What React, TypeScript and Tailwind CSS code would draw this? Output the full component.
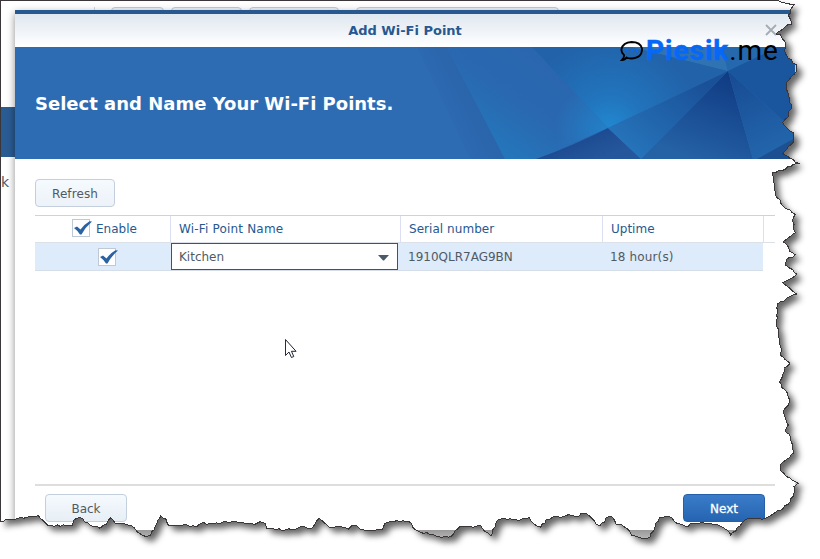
import React from "react";

const EDGE: number[][] = [
  [776, 0.5], [785, 3], [794, 4.7], [790.7, 10], [790.7, 13], [788.3, 15], [790.7, 20], [791.7, 24], [786, 26], [781.7, 30], [776, 34], [780.7, 35], [782, 38.3], [786, 43.3], [784.7, 50], [785.3, 53.3], [788.3, 58.3], [796.7, 65], [796, 71.7], [791.7, 76], [786.7, 82.7], [786, 88.3], [788.3, 93.3], [789.3, 98.3], [791.7, 108.3], [788.3, 113.3], [788.3, 117], [782.7, 122.7], [788.3, 129.3], [794, 133.3], [794, 141.7], [788.3, 146.7], [782.7, 154], [790, 158.3], [798.3, 163.3], [793.3, 164.3], [785, 169.3], [772.7, 172.7], [773.3, 178.3], [774, 183], [775, 195], [780, 200], [782.7, 206], [790, 210], [795.3, 214], [793.3, 218], [793.3, 228], [795.3, 232.7], [790, 236.7], [783.3, 241.7], [788.3, 246.7], [790, 251.7], [795.3, 255], [786.7, 259.3], [785.3, 265], [790, 268.3], [797.3, 274], [790, 279], [782.7, 282.7], [790, 288.3], [796.7, 294], [790, 296.7], [784, 301], [777.3, 304.3], [778, 311.7], [776, 321.7], [778.7, 333.3], [779.3, 343.3], [781.7, 350], [780, 355], [790, 363.3], [784, 368], [782.7, 375], [779.3, 381.7], [781.7, 387.3], [786, 390.7], [790, 400], [788.3, 405], [783.3, 410.7], [785.7, 418.3], [788.3, 425], [785.3, 430], [790.7, 437.3], [792.7, 445], [794, 452.7], [786.7, 459.3], [780, 465], [780.7, 470.7], [786.7, 476.7], [798, 483.3], [794, 486.7], [794, 493.3], [790, 501.7], [783.3, 508.3], [775, 512.7], [770, 516], [762.7, 519.3], [753.3, 518.3], [746, 519.3], [740, 526], [730.7, 535], [726.7, 530], [721.7, 526.7], [713.3, 524.3], [703.3, 522.7], [690, 524], [688.3, 526.7], [676.7, 523.3], [671.7, 517.3], [666, 516], [659.3, 517.3], [655, 526.7], [650, 537.3], [643.3, 538.3], [631.7, 535.7], [629.3, 530.7], [621.7, 525], [616, 524], [611.7, 516.7], [608.3, 516.7], [600, 526], [596, 524], [591.7, 518.3], [586.7, 514], [580.7, 514], [578.3, 516.7], [568.3, 514.7], [563.3, 516.7], [553.3, 516.7], [546, 520], [540.7, 527.3], [533.3, 523.3], [529.3, 517.7], [516.7, 520], [503.3, 518.3], [497.7, 520], [495, 526.7], [491, 535.7], [488.3, 533.3], [484, 530.7], [480.7, 525.7], [473.3, 527.3], [469, 526], [460, 526.7], [455, 530.7], [451.7, 536], [441.7, 537.3], [433.3, 534.7], [420, 532], [415, 529.3], [409.3, 521.7], [396.7, 520.7], [385, 523.3], [382.7, 529], [366.7, 531], [360.7, 530], [356.7, 525.7], [351.7, 525.7], [348.3, 529.3], [340, 526.7], [329.3, 527.3], [325, 523.3], [319.3, 518.3], [316, 521.7], [311.7, 528.3], [300.7, 526.7], [296.7, 528.7], [285, 530], [270, 528.7], [266.7, 528.3], [265, 523.3], [260, 521.7], [255, 524.3], [246.7, 524], [236, 521.7], [226.7, 522], [213.3, 524], [200.7, 523.3], [196.7, 526.7], [183.3, 525], [175, 526], [168.3, 525], [166, 519.3], [160.7, 515.7], [157.3, 520.7], [155, 526.7], [150.7, 535], [146.7, 536.7], [139.3, 533.3], [131.7, 526], [125, 524], [115, 523.3], [110.7, 517.7], [106.7, 524], [100, 528.3], [90, 525], [80, 517.7], [74, 520], [72.3, 525.3], [48.3, 526], [43.3, 520.7], [38.3, 515.7], [28.3, 517], [20, 517.7], [15, 519.3], [6.7, 519], [2.7, 521.7], [0.5, 521.7],
];

// Adds small steps between the outline's corners so the paper looks torn.
function tornPath(): string {
  const out: string[] = [];
  EDGE.forEach(([x, y], i) => {
    out.push(`${x} ${y}`);
    const next = EDGE[i + 1];
    if (!next) return;
    const len = Math.hypot(next[0] - x, next[1] - y);
    const steps = Math.floor(len / 3);
    for (let s = 1; s < steps; s++) {
      const t = s / steps;
      const k = Math.sin(i * 12.9 + s * 78.2) * 0.8;
      const nx = (next[1] - y) / len;
      const ny = -(next[0] - x) / len;
      out.push(`${(x + (next[0] - x) * t + nx * k).toFixed(1)} ${(y + (next[1] - y) * t + ny * k).toFixed(1)}`);
    }
  });
  return "M0.5 0.5L" + out.join("L") + "Z";
}

function TornEdge() {
  const d = tornPath();
  return (
    <svg className="pointer-events-none absolute inset-0" width="820" height="559" viewBox="0 0 820 559">
      <defs>
        <clipPath id="outside">
          <path d={"M0 0H820V559H0Z" + d} clipRule="evenodd" />
        </clipPath>
        <clipPath id="inside">
          <path d={d} />
        </clipPath>
        <filter id="soft" x="-5%" y="-5%" width="110%" height="110%" colorInterpolationFilters="sRGB">
          <feGaussianBlur stdDeviation="3" />
        </filter>
        <linearGradient id="strip" x1="0" y1="0" x2="0" y2="1">
          <stop offset="0" stopColor="#999" />
          <stop offset="1" stopColor="#bbb" />
        </linearGradient>
      </defs>
      <rect x="0" y="530" width="820" height="10" fill="url(#strip)" clipPath="url(#inside)" />
      <g clipPath="url(#outside)">
        <rect width="820" height="559" fill="#fff" />
        <g transform="translate(5 5)">
          <path d={d} fill="#000" fillOpacity="0.6" filter="url(#soft)" />
        </g>
      </g>
      <path d={d} fill="none" stroke="#3b3639" strokeWidth="1" shapeRendering="crispEdges" />
    </svg>
  );
}

function BannerArt() {
  return (
    <svg className="block" width="395" height="112" viewBox="400 47 395 112">
      <defs>
        <linearGradient id="beam" x1="425" y1="105" x2="475" y2="80" gradientUnits="userSpaceOnUse">
          <stop offset="0" stopColor="#2d6cb3" />
          <stop offset="1" stopColor="#2a63aa" />
        </linearGradient>
        <linearGradient id="field" x1="580" y1="60" x2="510" y2="159" gradientUnits="userSpaceOnUse">
          <stop offset="0" stopColor="#2965ae" />
          <stop offset="0.6" stopColor="#2969b1" />
          <stop offset="1" stopColor="#2476bb" />
        </linearGradient>
        <radialGradient id="glow" cx="610" cy="128" r="90" gradientUnits="userSpaceOnUse">
          <stop offset="0" stopColor="#2188d0" />
          <stop offset="0.4" stopColor="#2173bb" />
          <stop offset="1" stopColor="#2262a9" />
        </radialGradient>
        <radialGradient id="glowLeft" cx="605" cy="129" r="50" gradientUnits="userSpaceOnUse">
          <stop offset="0" stopColor="#2280c7" />
          <stop offset="1" stopColor="#2280c7" stopOpacity="0" />
        </radialGradient>
        <linearGradient id="low" x1="590" y1="133" x2="600" y2="159" gradientUnits="userSpaceOnUse">
          <stop offset="0" stopColor="#1c4a91" />
          <stop offset="1" stopColor="#25579c" />
        </linearGradient>
        <linearGradient id="mid" x1="700" y1="80" x2="635" y2="159" gradientUnits="userSpaceOnUse">
          <stop offset="0" stopColor="#1a5098" />
          <stop offset="1" stopColor="#2675bb" />
        </linearGradient>
        <linearGradient id="deep" x1="728" y1="71" x2="695" y2="159" gradientUnits="userSpaceOnUse">
          <stop offset="0" stopColor="#0f3a82" />
          <stop offset="1" stopColor="#2561a5" />
        </linearGradient>
        <linearGradient id="side" x1="728" y1="71" x2="770" y2="159" gradientUnits="userSpaceOnUse">
          <stop offset="0" stopColor="#174a92" />
          <stop offset="1" stopColor="#2367ad" />
        </linearGradient>
      </defs>
      <rect x="400" y="47" width="395" height="112" fill="#2d6cb3" />
      <path d="M417 47H447L505 159H470Z" fill="url(#beam)" />
      <path d="M447 47H640V159H505Z" fill="url(#field)" />
      <path d="M532 47L608 128L536 159H505Z" fill="url(#glowLeft)" />
      <path d="M532 47H728V71L608 128Z" fill="url(#glow)" />
      <path d="M632 47H722L728 71Z" fill="#3b7fba" fillOpacity="0.6" />
      <path d="M722 47H790L728 71Z" fill="#2568ae" />
      <path d="M536 159Q575 145 608 128L641 159Z" fill="url(#low)" />
      <path d="M608 128L728 71L641 159Z" fill="url(#mid)" />
      <path d="M728 71L641 159H753Z" fill="url(#deep)" />
      <path d="M728 71L795 131V159H753Z" fill="url(#side)" />
      <path d="M728 71L778 47H795V131Z" fill="#1a569e" />
      <path d="M757 159L795 138V159Z" fill="#1d5091" />
    </svg>
  );
}

function Checkbox() {
  return (
    <svg className="shrink-0" width="21" height="18" viewBox="0 0 21 18">
      <rect x="0.5" y="0.5" width="17" height="17" fill="#fff" stroke="#bfc9d6" />
      <path d="M2 9L5 7.500L8.500 10.500Q12.500 5 17.500 2.200L20 2.500Q13.500 8 9.500 15.500H8Q5.500 11.500 2 9Z" fill="#2b62a3" />
    </svg>
  );
}

function Logo() {
  return (
    <div className="absolute left-[620px] top-[35px] flex h-8 items-center whitespace-nowrap">
      <svg className="mt-[-1px] shrink-0" width="26" height="22" viewBox="0 0 26 22" fill="none">
        <path d="M4 15Q1 12.500 1.500 9Q3 2.500 11.500 2Q20.500 2 22 8.500Q22.500 18 11 18.500Q8.500 18.500 6.500 17.500Q5 20 2 20Q4.500 17.500 4 15Z" stroke="#000" strokeWidth="1.800" />
        <path d="M6 9h2v3h-2zM11 9h2v3h-2zM16 9h2v3h-2z" fill="#0768f8" />
      </svg>
      <span className="font-['Roboto',sans-serif] text-[28px] font-bold tracking-[1px] text-[#0768f8] [-webkit-text-stroke:0.4px_#0768f8]">Piesik</span>
      <span className="font-['Roboto',sans-serif] text-[28px] tracking-[0.9px] text-black">.me</span>
    </div>
  );
}

export default function App() {
  return (
    <div className="relative h-[559px] w-[820px] overflow-hidden bg-white font-['DejaVu_Sans',Verdana,sans-serif] text-[12px] text-[#505a64]">
      <div className="flex h-[530px] flex-col pl-px">
        <div className="flex h-[107px] items-start pt-[7px]">
          <div className="ml-[93px] h-10 w-px bg-[#d5dae0]" />
          <div className="ml-4 h-7 w-[53px] rounded-sm border border-[#c0cbd8] bg-[#edf2f7]" />
          <div className="ml-[7px] h-7 w-[71px] rounded-sm border border-[#c0cbd8] bg-[#edf2f7]" />
          <div className="ml-[7px] h-7 w-[90px] rounded-sm border border-[#c0cbd8] bg-[#edf2f7]" />
          <div className="ml-[17px] h-7 w-[203px] rounded-sm border border-[#c0cbd8] bg-[#edf2f7]" />
        </div>
        <div className="h-[50px] bg-[#2a5c94]" />
        <div className="pt-[17px] text-[14px] leading-4">k</div>
      </div>

      <section className="absolute left-[15px] top-[10px] flex h-[540px] w-[780px] flex-col border-t-4 border-[#27588f] bg-white shadow-[0_3px_8px_rgba(0,0,0,0.45)]">
        <header className="flex h-[33px] shrink-0 items-center bg-linear-to-b from-[#dfe7ef] to-white">
          <span className="w-8" />
          <h1 className="flex-1 text-center text-[13px] font-bold text-[#27588f]">Add Wi-Fi Point</h1>
          <svg className="mb-[2px] mr-[15px]" width="17" height="12" viewBox="0 0 17 12" stroke="#a4abb2" strokeWidth="1.800">
            <path d="M3 1L13 11M13 1L3 11" />
          </svg>
        </header>
        <div className="flex h-[112px] shrink-0 items-center bg-[#2d6cb3]">
          <h2 className="w-[385px] shrink-0 whitespace-nowrap pl-5 text-[18px] font-bold text-white">Select and Name Your Wi-Fi Points.</h2>
          <BannerArt />
        </div>
        <main className="flex h-[325px] shrink-0 flex-col items-start px-5 pt-5">
          <button className="h-7 w-20 rounded-sm border border-[#c3cfdd] bg-linear-to-b from-[#f5fafe] to-[#ecf2f8] pt-px text-[12px] tracking-[0.1px] text-[#505a64]">Refresh</button>
          <div className="mt-2 flex h-7 w-[740px] items-stretch border-y border-t-[#ced2d9] border-b-[#dce1e9] text-[#27588f]">
            <div className="flex w-[136px] items-center border-r border-[#dcdff3] pl-[37px]">
              <div className="mb-[2px] flex">
                <Checkbox />
              </div>
              <span className="ml-[3px]">Enable</span>
            </div>
            <div className="flex w-[230px] items-center border-r border-[#dcdff3] pl-2 tracking-[0.18px]">Wi-Fi Point Name</div>
            <div className="flex w-[202px] items-center border-r border-[#dcdff3] pl-2 tracking-[0.05px]">Serial number</div>
            <div className="flex w-[161px] items-center border-r border-[#dcdff3] pl-2">Uptime</div>
          </div>
          <div className="flex h-7 w-[728px] items-stretch border-b border-[#d5dee8] bg-[#deebfa]">
            <div className="flex w-[136px] items-center pl-[63px] pt-px">
              <Checkbox />
            </div>
            <div className="flex w-[227px] items-center justify-between border border-[#27588f] bg-white pl-[7px] pr-2">
              <span>Kitchen</span>
              <svg className="mt-[2px]" width="11" height="6" viewBox="0 0 11 6">
                <path d="M0 0H11L6 5.500H5Z" fill="#4b5a68" />
              </svg>
            </div>
            <div className="flex w-[203px] items-center pl-[10px]">1910QLR7AG9BN</div>
            <div className="flex items-center pl-[9px] tracking-[0.15px]">18 hour(s)</div>
          </div>
        </main>
        <footer className="mx-5 flex h-10 shrink-0 items-start justify-between border-t-2 border-[#dedede] px-[10px] pt-2">
          <button className="h-7 w-[82px] rounded-sm border border-[#c3cfdd] bg-linear-to-b from-[#f5fafe] to-[#e7eef5] pt-px text-[12px] text-[#505a64]">Back</button>
          <button className="h-7 w-[82px] rounded-sm border border-[#2360a9] bg-linear-to-b from-[#3b7cca] to-[#2464b0] pt-px text-[12px] text-white [-webkit-text-stroke:0.3px_white]">Next</button>
        </footer>
      </section>

      <svg className="absolute left-[285px] top-[339px]" width="12" height="20" viewBox="0 0 13 20" preserveAspectRatio="none">
        <path d="M0.500 0.500V16.500L4.300 13L7 18.500L9.500 17.500L7 12.300H12Z" fill="#fff" stroke="#161a2b" />
      </svg>

      <TornEdge />
      <Logo />
    </div>
  );
}
